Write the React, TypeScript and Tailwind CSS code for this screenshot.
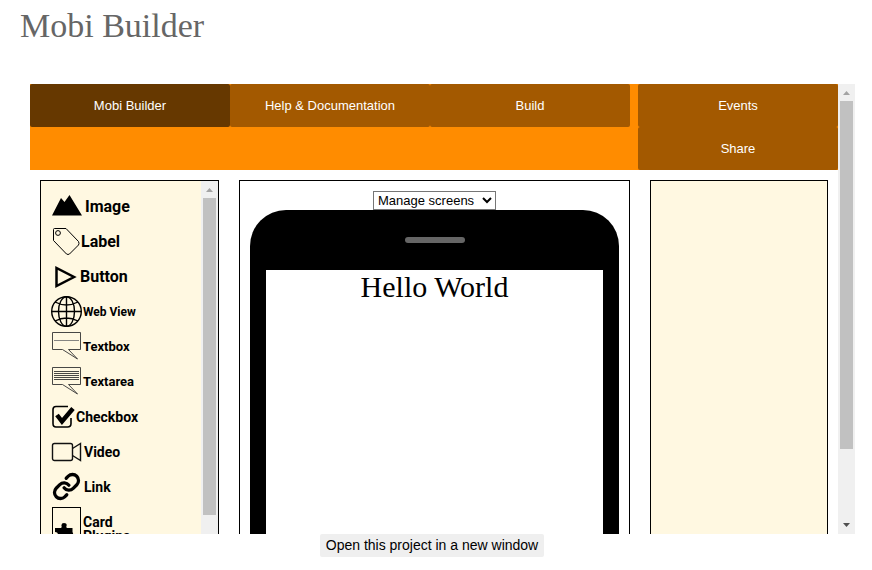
import type { ReactNode } from "react";
import { Link as LinkIcon } from "lucide-react";

type Tool = { label: ReactNode; name: string; iconWidth: string; textSize: string; icon: ReactNode };

const bubble = "M11.5 18.5H1.5V1.5H29.5V18.5H17.5L26.5 28L11.5 18.5";

const tools: Tool[] = [
  {
    name: "image",
    label: "Image",
    iconWidth: "w-[34px]",
    textSize: "text-[16px]",
    icon: <path d="M1 24.500L10 7L13.500 11L18.500 4L31 24.500Z" fill="#000" />,
  },
  {
    name: "label",
    label: "Label",
    iconWidth: "w-[30px]",
    textSize: "text-[16px]",
    icon: (
      <g fill="none" stroke="#000">
        <path d="M2.500 3.500Q2.500 2.500 3.500 2.500H15L27.500 15.500Q28.500 17.500 27.500 19L18.500 28Q17 29 15.500 28L2.500 14.500Z" />
        <circle cx="7" cy="7" r="2.400" />
      </g>
    ),
  },
  {
    name: "button",
    label: "Button",
    iconWidth: "w-[29px]",
    textSize: "text-[16px]",
    icon: <path d="M5.500 7V25L23 16Z" fill="none" stroke="#000" strokeWidth="2.500" />,
  },
  {
    name: "web-view",
    label: "Web View",
    iconWidth: "w-[32px]",
    textSize: "text-[12px]",
    icon: (
      <g fill="none" stroke="#000" strokeWidth="1.400">
        <circle cx="15.500" cy="15.500" r="14.800" />
        <ellipse cx="15.500" cy="15.500" rx="8" ry="14.800" />
        <path d="M15.500 .7V30.300M.7 15.500H30.300M4 6Q15.500 12 27 6M4 25Q15.500 19 27 25" />
      </g>
    ),
  },
  {
    name: "textbox",
    label: "Textbox",
    iconWidth: "w-[32px]",
    textSize: "text-[13px]",
    icon: (
      <g fill="none" stroke="#333" strokeWidth=".9">
        <path d={bubble} />
        <path d="M3 9.500H28" stroke="#777" />
      </g>
    ),
  },
  {
    name: "textarea",
    label: "Textarea",
    iconWidth: "w-[32px]",
    textSize: "text-[13px]",
    icon: (
      <g fill="none" stroke="#333" strokeWidth=".9">
        <path d={bubble} />
        <path d="M3 5.500H28M3 7.500H28M3 9.500H28M3 11.500H28M3 13.500H28" />
      </g>
    ),
  },
  {
    name: "checkbox",
    label: "Checkbox",
    iconWidth: "w-[25px]",
    textSize: "text-[14px]",
    icon: (
      <g fill="none" stroke="#000">
        <path d="M17 5.500H5Q2 5.500 2 8.500V22.500Q2 26 5 26H16.500Q20 26 20 22.500V17" strokeWidth="1.600" />
        <path d="M6 14L11 20.500L22 7.500" strokeWidth="4.500" />
      </g>
    ),
  },
  {
    name: "video",
    label: "Video",
    iconWidth: "w-[33px]",
    textSize: "text-[14px]",
    icon: (
      <g fill="none" stroke="#111" strokeWidth="1.400">
        <rect x="1.500" y="7.500" width="20" height="17" rx="2" />
        <path d="M21.500 12.500L29.500 7.500V24.500L21.500 19.500" />
      </g>
    ),
  },
  {
    name: "link",
    label: "Link",
    iconWidth: "w-[33px]",
    textSize: "text-[14px]",
    icon: <LinkIcon x={1} y={1} width={29} height={29} color="#000" strokeWidth={2.700} />,
  },
  {
    name: "card",
    label: (
      <>
        Card
        <br />
        Plugins
      </>
    ),
    iconWidth: "w-[32px]",
    textSize: "text-[14px]",
    icon: (
      <>
        <rect x="1.500" y="1.500" width="28" height="40" fill="none" stroke="#000" />
        <path
          d="M4 22H10Q11 21 10.500 20Q10 17 13 17Q16.500 17 15.500 20Q15 21 16 22H21.500V26Q23 29 21.500 31V38H4V31Q7 31 7 28.500Q7 26 4 26Z"
          fill="#000"
        />
      </>
    ),
  },
];

function NavButton({ children, active = false }: { children: ReactNode; active?: boolean }) {
  return (
    <button
      type="button"
      className={`h-[43px] w-[200px] rounded-xs text-center text-[13px] font-medium text-white ${
        active ? "bg-[#663800]" : "bg-[#a35900]"
      }`}
    >
      {children}
    </button>
  );
}

function ScrollTrack({ thumb }: { thumb: string }) {
  return (
    <div aria-hidden="true" className="flex w-[17px] shrink-0 flex-col items-center bg-[#f0f0f0]">
      <svg className="h-[17px] w-[17px] shrink-0" viewBox="0 0 17 17">
        <path d="M5 11L8.500 7L12 11Z" fill="#a3a3a3" />
      </svg>
      <div className={`w-[13px] bg-[#c1c1c1] ${thumb}`} />
      <svg className="mt-auto h-[17px] w-[17px] shrink-0" viewBox="0 0 17 17">
        <path d="M5 6L8.500 10L12 6Z" fill="#505050" />
      </svg>
    </div>
  );
}

function Toolbox() {
  return (
    <aside className="flex h-[400px] border border-black bg-[#fff8e1]">
      <ul className="min-w-0 flex-1 pt-[10px] pl-[10px] font-[Roboto,sans-serif] font-bold text-black">
        {tools.map((tool) => (
          <li key={tool.name}>
            <button type="button" className="flex h-[35px] items-start text-left">
              <svg className={`h-[42px] shrink-0 overflow-visible ${tool.iconWidth}`} aria-hidden="true">
                {tool.icon}
              </svg>
              <span className={`pt-[9px] leading-[14px] ${tool.textSize}`}>{tool.label}</span>
            </button>
          </li>
        ))}
      </ul>
      <ScrollTrack thumb="h-[317px]" />
    </aside>
  );
}

function PhonePreview() {
  return (
    <main className="flex h-[780px] flex-col items-center border border-black bg-white p-[10px]">
      <select
        aria-label="Manage screens"
        className="h-[19px] w-[123px] shrink-0 rounded-none border border-[#767676] bg-white text-[13px] text-black"
      >
        <option>Manage screens</option>
      </select>
      <div className="w-full flex-1 rounded-[36px] bg-black px-4 pb-[60px]">
        <div className="flex h-[60px] items-center justify-center">
          <span className="h-[6px] w-[60px] rounded-full bg-[#666]" />
        </div>
        <div className="h-[600px] bg-white text-center font-['Liberation_Serif',serif] text-[30px] leading-[33px] text-black">
          Hello World
        </div>
      </div>
    </main>
  );
}

export default function App() {
  return (
    <div className="bg-white font-['Liberation_Sans',Arial,sans-serif]">
      <h1 className="px-5 pt-[6px] font-['Liberation_Serif',serif] text-[34px] leading-[40px] text-[#666]">
        Mobi Builder
      </h1>
      <section className="mt-[38px] mr-[17px] ml-[30px] flex h-[450px] overflow-hidden">
        <div className="min-w-0 flex-1">
          <nav className="flex items-start justify-between bg-[#ff8c00]">
            <div className="flex">
              <NavButton active>Mobi Builder</NavButton>
              <NavButton>Help &amp; Documentation</NavButton>
              <NavButton>Build</NavButton>
            </div>
            <div className="flex flex-col">
              <NavButton>Events</NavButton>
              <NavButton>Share</NavButton>
            </div>
          </nav>
          <div className="grid grid-cols-[179fr_391fr_178fr] gap-5 p-[10px]">
            <Toolbox />
            <PhonePreview />
            <aside className="border border-black bg-[#fff8e1]" />
          </div>
        </div>
        <ScrollTrack thumb="h-[348px]" />
      </section>
      <footer className="flex justify-center pr-2">
        <button type="button" className="h-[23px] rounded-xs bg-[#efefef] px-[6px] text-[14px] text-black">
          Open this project in a new window
        </button>
      </footer>
    </div>
  );
}
